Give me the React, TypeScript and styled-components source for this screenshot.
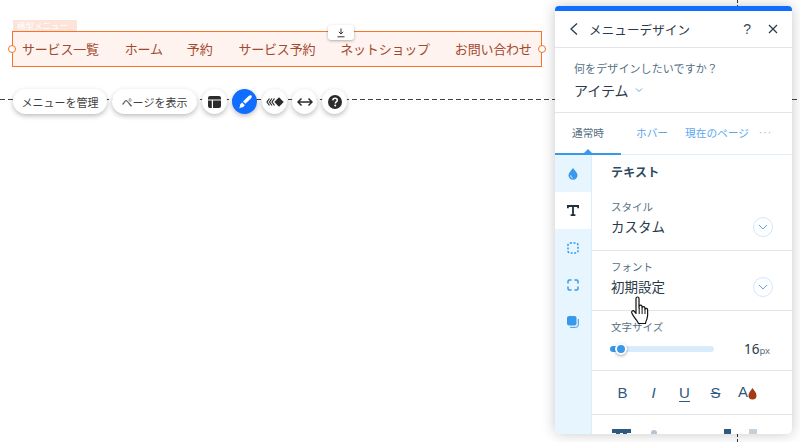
import React from "react";
import styled, { createGlobalStyle } from "styled-components";

const Global = createGlobalStyle`
  html, body { margin: 0; padding: 0; background: #fff; }
  body { font-family: "Noto Sans CJK JP", "Noto Sans", sans-serif; overflow: hidden; }
  * { box-sizing: border-box; }
`;

const Page = styled.div`
  position: relative;
  width: 800px;
  height: 442px;
  overflow: hidden;
  background: #fff;
  padding: 20px 0 0 12px;
`;
const VGuide = styled.div`
  position: absolute;
  left: 737px;
  top: 0;
  bottom: 0;
  border-left: 1px dashed #333;
`;
const MenuLabel = styled.div`
  width: 64px;
  height: 11px;
  margin-left: 1px;
  background: #fde4da;
  color: #fff;
  font-size: 8.5px;
  line-height: 11px;
  padding-left: 4px;
  white-space: nowrap;
`;
const MenuBox = styled.nav`
  position: relative;
  width: 530px;
  height: 36px;
  border: 1px solid #f97429;
  background: #fef3ee;
  display: flex;
  align-items: center;
  padding-left: 9px;
`;
const MenuItem = styled.span<{ $gap: number }>`
  color: #a3492f;
  font-size: 13px;
  line-height: 36px;
  margin-right: ${(p) => p.$gap}px;
  white-space: nowrap;
  letter-spacing: -0.2px;
`;
const Handle = styled.span<{ $side: "left" | "right" }>`
  position: absolute;
  top: 13px;
  ${(p) => p.$side}: -5px;
  width: 8px;
  height: 8px;
  border-radius: 50%;
  background: #fff;
  border: 1.5px solid #f97429;
`;
const DownloadTab = styled.div`
  position: absolute;
  left: 315px;
  top: -7px;
  width: 26px;
  height: 15px;
  background: #fff;
  border-radius: 3px;
  box-shadow: 0 1px 3px rgba(0, 0, 0, 0.3);
  display: flex;
  align-items: center;
  justify-content: center;
`;
const ToolRow = styled.div`
  position: relative;
  display: flex;
  align-items: center;
  margin: 22px 0 0 1px;
  height: 25px;
  gap: 5px;
  &::before {
    content: "";
    position: absolute;
    left: -13px;
    width: 800px;
    top: 10px;
    height: 1px;
    background: repeating-linear-gradient(90deg, #444 0 5px, transparent 5px 8px);
  }
`;
const Pill = styled.button<{ $w: number }>`
  position: relative;
  height: 25px;
  border: 0;
  border-radius: 13px;
  background: #fff;
  box-shadow: 0 2px 5px rgba(0, 0, 0, 0.26);
  color: #3f3f3f;
  font-family: inherit;
  font-size: 11px;
  padding: 0;
  white-space: nowrap;
  text-align: center;
  width: ${(p) => p.$w}px;
`;
const Round = styled.button<{ $active?: boolean }>`
  position: relative;
  width: 25px;
  height: 25px;
  border: 0;
  padding: 0;
  border-radius: 50%;
  background: ${(p) => (p.$active ? "#116dff" : "#fff")};
  box-shadow: 0 2px 5px rgba(0, 0, 0, 0.26);
  display: flex;
  align-items: center;
  justify-content: center;
`;
const Panel = styled.aside`
  position: absolute;
  left: 555px;
  top: 6px;
  width: 237px;
  height: 428px;
  background: #fff;
  border-radius: 4px 4px 5px 5px;
  overflow: hidden;
  box-shadow: 0 0 14px rgba(0, 0, 0, 0.22);
  border-top: 5px solid #116dff;
  display: flex;
  flex-direction: column;
`;
const Header = styled.header`
  height: 37px;
  flex: none;
  display: flex;
  align-items: center;
  padding: 0 14px 0 14px;
  border-bottom: 1.5px solid #e3e3e8;
  color: #2b3a4a;
  font-size: 12.5px;
`;
const HeaderTitle = styled.span`
  margin-left: 10px;
  flex: 1;
  letter-spacing: 0.15px;
`;
const HeaderIcon = styled.span`
  display: flex;
  margin-left: 17px;
`;
const Question = styled.span`
  font-family: "Liberation Sans", sans-serif;
  font-size: 14px;
  color: #3b4a58;
`;
const Picker = styled.section`
  height: 65px;
  flex: none;
  padding: 12px 0 0 19px;
  border-bottom: 1px solid #dfe5eb;
`;
const PickerLabel = styled.div`
  font-size: 11px;
  line-height: 16px;
  color: #577083;
  letter-spacing: 0.1px;
`;
const PickerValue = styled.div`
  display: flex;
  align-items: center;
  gap: 6px;
  margin-top: 4px;
  font-size: 14px;
  line-height: 20px;
  color: #2b3a4a;
`;
const Tabs = styled.div`
  position: relative;
  height: 42px;
  flex: none;
  display: flex;
  align-items: center;
  padding-bottom: 2px;
  font-size: 10.7px;
  color: #5ba7ef;
  border-bottom: 1px solid #dcedfb;
  &::after {
    content: "";
    position: absolute;
    left: 0;
    bottom: -1px;
    width: 66px;
    height: 2px;
    background: #3899ec;
  }
  &::before {
    content: "";
    position: absolute;
    left: 29px;
    bottom: 1px;
    border: 4px solid transparent;
    border-top: 0;
    border-bottom-color: #3899ec;
  }
`;
const Tab = styled.span<{ $active?: boolean; $w: number }>`
  width: ${(p) => p.$w}px;
  text-align: center;
  white-space: nowrap;
  color: ${(p) => (p.$active ? "#577083" : "#5ba7ef")};
`;
const Dots = styled.span`
  margin-left: 7px;
  color: #a9b6c2;
  font-size: 9px;
  letter-spacing: -0.5px;
`;
const Body = styled.div`
  flex: 1;
  min-height: 0;
  display: flex;
`;
const Rail = styled.div`
  width: 37px;
  flex: none;
  background: #e7f5fe;
  border-right: 1px solid #dcedfb;
  display: flex;
  flex-direction: column;
`;
const RailItem = styled.div<{ $active?: boolean }>`
  height: 37px;
  display: flex;
  align-items: center;
  justify-content: center;
  background: ${(p) => (p.$active ? "#fff" : "transparent")};
`;
const Content = styled.div`
  flex: 1;
  min-width: 0;
  overflow: hidden;
`;
const SectionTitle = styled.div`
  height: 36px;
  padding: 9px 0 0 19px;
  font-size: 12px;
  line-height: 16px;
  font-weight: 700;
  color: #2e4a62;
  letter-spacing: 0.2px;
`;
const Field = styled.div`
  position: relative;
  height: 60px;
  padding: 8px 0 0 19px;
  border-bottom: 1px solid #dfe5eb;
`;
const FieldLabel = styled.div`
  font-size: 10.5px;
  line-height: 15px;
  color: #577083;
`;
const FieldValue = styled.div`
  font-size: 13.5px;
  line-height: 20px;
  margin-top: 2px;
  color: #2b3a4a;
`;
const Chevron = styled.span`
  position: absolute;
  right: 19px;
  top: 26px;
  width: 20px;
  height: 20px;
  border-radius: 50%;
  background: #fff;
  border: 1px solid #cfe6fb;
  display: flex;
  align-items: center;
  justify-content: center;
`;
const SizeRow = styled.div`
  height: 60px;
  padding: 8px 0 0 19px;
  border-bottom: 1px solid #dfe5eb;
`;
const SliderLine = styled.div`
  display: flex;
  align-items: center;
  margin: 6px 0 0 -1px;
`;
const Track = styled.div`
  position: relative;
  width: 104px;
  height: 6px;
  border-radius: 3px;
  background: #d9ecfc;
`;
const TrackFill = styled.div`
  width: 12px;
  height: 6px;
  border-radius: 3px;
  background: #3899ec;
`;
const Knob = styled.span`
  position: absolute;
  left: 5px;
  top: -3px;
  width: 12px;
  height: 12px;
  border-radius: 50%;
  background: #3899ec;
  border: 2.5px solid #fff;
  box-shadow: 0 1px 3px rgba(0, 0, 0, 0.35);
`;
const SizeValue = styled.span`
  margin-left: 30px;
  font-family: "Noto Sans", sans-serif;
  font-size: 13.5px;
  color: #2b3a4a;
  white-space: nowrap;
`;
const Unit = styled.span`
  font-size: 9.5px;
  color: #577083;
`;
const FormatRow = styled.div`
  height: 44px;
  padding: 0 0 0 15px;
  display: flex;
  align-items: center;
  border-bottom: 1px solid #dfe5eb;
`;
const FormatBtn = styled.span<{ $underline?: boolean; $strike?: boolean; $italic?: boolean }>`
  position: relative;
  width: 31px;
  text-align: center;
  font-family: "Liberation Sans", sans-serif;
  font-size: 15px;
  line-height: 18px;
  color: #2e5a80;
  font-style: ${(p) => (p.$italic ? "italic" : "normal")};
  text-decoration: ${(p) => (p.$underline ? "underline" : p.$strike ? "line-through" : "none")};
  text-underline-offset: 3px;
`;
const FormatColor = styled.span`
  display: flex;
  align-items: flex-start;
  font-family: "Liberation Sans", sans-serif;
  font-size: 15px;
  line-height: 15px;
  color: #2e5a80;
  margin-left: 7px;
  height: 18px;
`;
const AlignRow = styled.div`
  display: flex;
  align-items: flex-start;
  padding: 14px 0 0 20px;
  gap: 19px;
`;
const Cursor = styled.svg`
  position: absolute;
  left: 630px;
  top: 296px;
`;

const MENU: [string, number][] = [
  ["サービス一覧", 26],
  ["ホーム", 24],
  ["予約", 26],
  ["サービス予約", 25],
  ["ネットショップ", 25],
  ["お問い合わせ", 0],
];

export default function App() {
  return (
    <Page>
      <Global />
      <VGuide />
      <MenuLabel>横型メニュー</MenuLabel>
      <MenuBox>
        {MENU.map(([t, g]) => (
          <MenuItem key={t} $gap={g}>{t}</MenuItem>
        ))}
        <Handle $side="left" />
        <Handle $side="right" />
        <DownloadTab>
          <svg width="10" height="10" viewBox="0 0 10 10" fill="none" stroke="#333" strokeWidth="1">
            <path d="M5 .5v5.5M2.8 3.8 5 6l2.2-2.2M1.5 8.8h7" />
          </svg>
        </DownloadTab>
      </MenuBox>
      <ToolRow>
        <Pill $w={94}>メニューを管理</Pill>
        <Pill $w={85}>ページを表示</Pill>
        <Round>
          <svg width="13" height="12" viewBox="0 0 13 12" fill="#2b2b2b">
            <path d="M2 0h9a2 2 0 0 1 2 2v1.500H0V2a2 2 0 0 1 2-2zM0 4.600h3.800V12H2a2 2 0 0 1-2-2zM5 4.600h8V10a2 2 0 0 1-2 2H5z" />
          </svg>
        </Round>
        <Round $active>
          <svg width="14" height="14" viewBox="0 0 14 14" fill="#fff">
            <path d="M13.400.6c-.7-.7-1.800-.4-2.800.5L5 6.400l2.400 2.400 5.500-5.400c.9-1 1.200-2.100.5-2.800zM4.200 7.400 2.300 9.300l-.6 2.900-1 1.200 1.500-.6 2.700-.6 1.900-2z" />
          </svg>
        </Round>
        <Round>
          <svg width="18" height="10" viewBox="0 0 18 10" fill="none" stroke="#2b2b2b" strokeWidth="1.2">
            <path d="M3.500 1.500 1 5l2.500 3.500M6 1.500 3.500 5 6 8.500M8.500 1.500 6 5l2.500 3.500" />
            <path d="M13 .3 17.700 5 13 9.700 8.300 5z" fill="#2b2b2b" stroke="none" />
          </svg>
        </Round>
        <Round>
          <svg width="16" height="10" viewBox="0 0 16 10" fill="none" stroke="#2b2b2b" strokeWidth="1.500">
            <path d="M1.500 5h13M4.500 1.500 1 5l3.500 3.500M11.500 1.500 15 5l-3.500 3.500" />
          </svg>
        </Round>
        <Round>
          <svg width="14" height="14" viewBox="0 0 14 14">
            <circle cx="7" cy="7" r="7" fill="#2b2b2b" />
            <path d="M4.800 5.400C4.900 4 5.900 3.300 7.100 3.300c1.300 0 2.200.8 2.200 1.900 0 1.700-2 1.700-2 3.200" fill="none" stroke="#fff" strokeWidth="1.500" />
            <circle cx="7.200" cy="10.500" r="1" fill="#fff" />
          </svg>
        </Round>
      </ToolRow>

      <Panel>
        <Header>
          <svg width="10" height="14" viewBox="0 0 10 14" fill="none" stroke="#2b3a4a" strokeWidth="1.300">
            <path d="M8 1.500 2 7l6 5.500" />
          </svg>
          <HeaderTitle>メニューデザイン</HeaderTitle>
          <Question>?</Question>
          <HeaderIcon>
            <svg width="10" height="10" viewBox="0 0 10 10" stroke="#2b3a4a" strokeWidth="1.200">
              <path d="M1 1l8 8M9 1 1 9" />
            </svg>
          </HeaderIcon>
        </Header>
        <Picker>
          <PickerLabel>何をデザインしたいですか？</PickerLabel>
          <PickerValue>
            アイテム
            <svg width="8" height="6" viewBox="0 0 8 6" fill="none" stroke="#5ba7ef" strokeWidth="1">
              <path d="M1 1.500 4 4.500l3-3" />
            </svg>
          </PickerValue>
        </Picker>
        <Tabs>
          <Tab $active $w={66}>通常時</Tab>
          <Tab $w={62}>ホバー</Tab>
          <Tab $w={68}>現在のページ</Tab>
          <Dots>···</Dots>
        </Tabs>
        <Body>
          <Rail>
            <RailItem>
              <svg width="10" height="12" viewBox="0 0 10 12">
                <path d="M5 0c2 2.600 4.500 4.800 4.500 7.300A4.500 4.500 0 0 1 .5 7.300C.5 4.800 3 2.600 5 0z" fill="#3899ec" />
                <path d="M2.700 7.500c0 1.300.8 2.200 1.800 2.400" stroke="#fff" fill="none" />
              </svg>
            </RailItem>
            <RailItem $active>
              <svg width="12" height="11" viewBox="0 0 12 11" fill="none" stroke="#1f2f3d" strokeWidth="1.800">
                <path d="M.9 3.200V1h10.200v2.200M6 1v9.500M3.600 10.200h4.800" />
              </svg>
            </RailItem>
            <RailItem>
              <svg width="12" height="12" viewBox="0 0 12 12" fill="none" stroke="#3899ec" strokeWidth="1.500" strokeDasharray="2 1.500">
                <rect x="1" y="1" width="10" height="10" rx="2" />
              </svg>
            </RailItem>
            <RailItem>
              <svg width="12" height="12" viewBox="0 0 12 12" fill="none" stroke="#3899ec" strokeWidth="1.500">
                <path d="M1 4.500v-2A1.500 1.500 0 0 1 2.500 1h2M7.500 1h2A1.500 1.500 0 0 1 11 2.500v2M11 7.500v2A1.500 1.500 0 0 1 9.500 11h-2M4.500 11h-2A1.500 1.500 0 0 1 1 9.500v-2" />
              </svg>
            </RailItem>
            <RailItem>
              <svg width="12" height="12" viewBox="0 0 12 12" fill="none">
                <rect x="0" y="0" width="9.500" height="9.500" rx="2" fill="#3899ec" />
                <path d="M11.300 3v5.800a2.500 2.500 0 0 1-2.500 2.500H3" stroke="#3899ec" />
              </svg>
            </RailItem>
          </Rail>
          <Content>
            <SectionTitle>テキスト</SectionTitle>
            <Field>
              <FieldLabel>スタイル</FieldLabel>
              <FieldValue>カスタム</FieldValue>
              <Chevron>
                <svg width="10" height="6" viewBox="0 0 10 6" fill="none" stroke="#5ba7ef" strokeWidth="1">
                  <path d="M1 1l4 4 4-4" />
                </svg>
              </Chevron>
            </Field>
            <Field>
              <FieldLabel>フォント</FieldLabel>
              <FieldValue>初期設定</FieldValue>
              <Chevron>
                <svg width="10" height="6" viewBox="0 0 10 6" fill="none" stroke="#5ba7ef" strokeWidth="1">
                  <path d="M1 1l4 4 4-4" />
                </svg>
              </Chevron>
            </Field>
            <SizeRow>
              <FieldLabel>文字サイズ</FieldLabel>
              <SliderLine>
                <Track>
                  <TrackFill />
                  <Knob />
                </Track>
                <SizeValue>16<Unit>px</Unit></SizeValue>
              </SliderLine>
            </SizeRow>
            <FormatRow>
              <FormatBtn>B</FormatBtn>
              <FormatBtn $italic>I</FormatBtn>
              <FormatBtn $underline>U</FormatBtn>
              <FormatBtn $strike>S</FormatBtn>
              <FormatColor>
                A
                <svg width="9" height="12" viewBox="0 0 9 12" style={{ marginTop: 4 }}>
                  <path d="M4.500 0c1.800 2.800 4 4.800 4 7.500a4 4 0 0 1-8 0C.5 4.800 2.700 2.800 4.500 0z" fill="#a33a12" />
                </svg>
              </FormatColor>
            </FormatRow>
            <AlignRow>
              <svg width="19" height="8" viewBox="0 0 19 8" fill="#2e5a80">
                <rect width="19" height="4" />
                <rect x="4" y="4" width="4" height="4" />
                <rect x="11" y="4" width="4" height="4" />
              </svg>
              <svg width="8" height="8" viewBox="0 0 8 8" fill="#b4c4d2">
                <circle cx="4" cy="4" r="3" />
              </svg>
              <svg width="8" height="8" viewBox="0 0 8 8" style={{ marginLeft: 47 }} fill="#2e5a80">
                <rect width="7" height="8" />
              </svg>
              <svg width="8" height="8" viewBox="0 0 8 8" style={{ marginLeft: -2 }} fill="#c4d0da">
                <rect width="8" height="8" />
              </svg>
            </AlignRow>
          </Content>
        </Body>
      </Panel>
      <Cursor width="22" height="30" viewBox="0 0 22 30">
        <path
          d="M6 2.500c0-2 3-2 3 0V12l.2-1.800c.2-1.600 2.700-1.500 2.800.2l.1 1.300c.2-1.500 2.600-1.500 2.800.2l.1 1.300c.3-1.400 2.500-1.200 2.600.5.2 3 .2 6-.5 8.600-.6 2.200-1.500 3.500-1.600 5.200H8.300c-.3-2-1.500-2.800-3-4.800-1.300-1.800-3-4.600-3.500-5.700-.8-1.800 1.300-3 2.500-1.700L6 17.500z"
          fill="#fff"
          stroke="#111"
          strokeWidth="1.200"
          strokeLinejoin="round"
        />
        <path d="M9.200 12v6M12.100 12v6M15 13v5" stroke="#111" strokeWidth="1" />
      </Cursor>
    </Page>
  );
}
